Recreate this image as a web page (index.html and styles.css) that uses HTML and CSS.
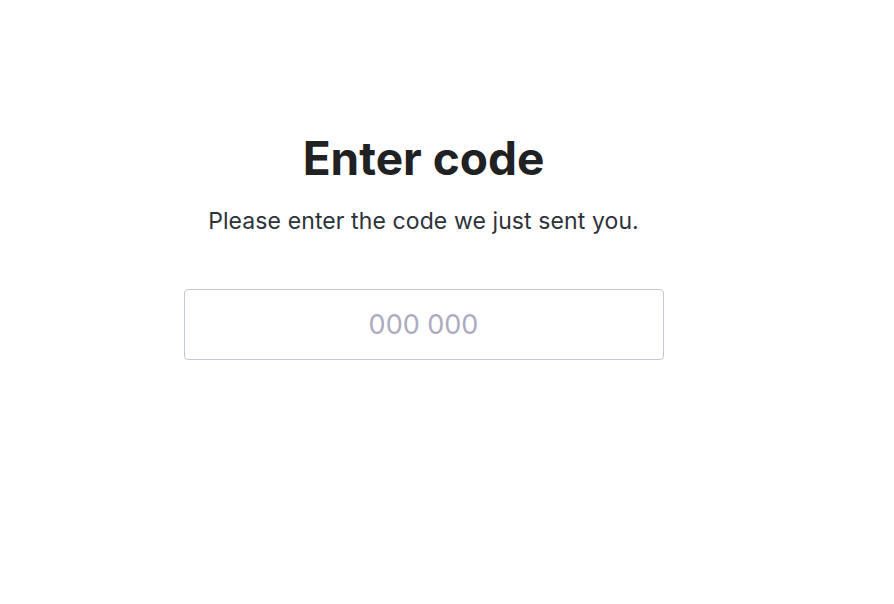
FILE: index.html
```html
<!DOCTYPE html>
<html lang="en">
<head>
<meta charset="utf-8">
<title>Enter code</title>
<link rel="stylesheet" href="styles.css">
</head>
<body>
<main class="page">
  <section class="card">
    <h1 class="title">Enter code</h1>
    <p class="subtitle">Please enter the code we just sent you.</p>
    <form class="form">
      <input class="code-input" type="text" inputmode="numeric" placeholder="000 000" aria-label="Code">
    </form>
  </section>
</main>
</body>
</html>
```
FILE: styles.css
```css
html, body {
  margin: 0;
  padding: 0;
  background: #ffffff;
}
body {
  font-family: "Inter", "Noto Sans", "Liberation Sans", sans-serif;
  color: #2d333a;
}
.page {
  display: flex;
  justify-content: center;
  padding: 128px 47px 0 0;
}
.card {
  width: 480px;
  display: flex;
  flex-direction: column;
  align-items: center;
}
.title {
  margin: 0;
  font-size: 46px;
  font-weight: 700;
  line-height: 60px;
  color: #202123;
  letter-spacing: 0;
}
.subtitle {
  margin: 18px 0 0;
  font-size: 23px;
  line-height: 30px;
  color: #2d333a;
  letter-spacing: 0.1px;
}
.form {
  width: 100%;
  margin-top: 53px;
}
.code-input {
  box-sizing: border-box;
  width: 100%;
  height: 71px;
  border: 1px solid #c2c8d0;
  border-radius: 4px;
  text-align: center;
  font-family: inherit;
  font-size: 27px;
  color: #2d333a;
  outline: none;
  background: #fff;
}
.code-input::placeholder {
  color: #acabc0;
}
```
